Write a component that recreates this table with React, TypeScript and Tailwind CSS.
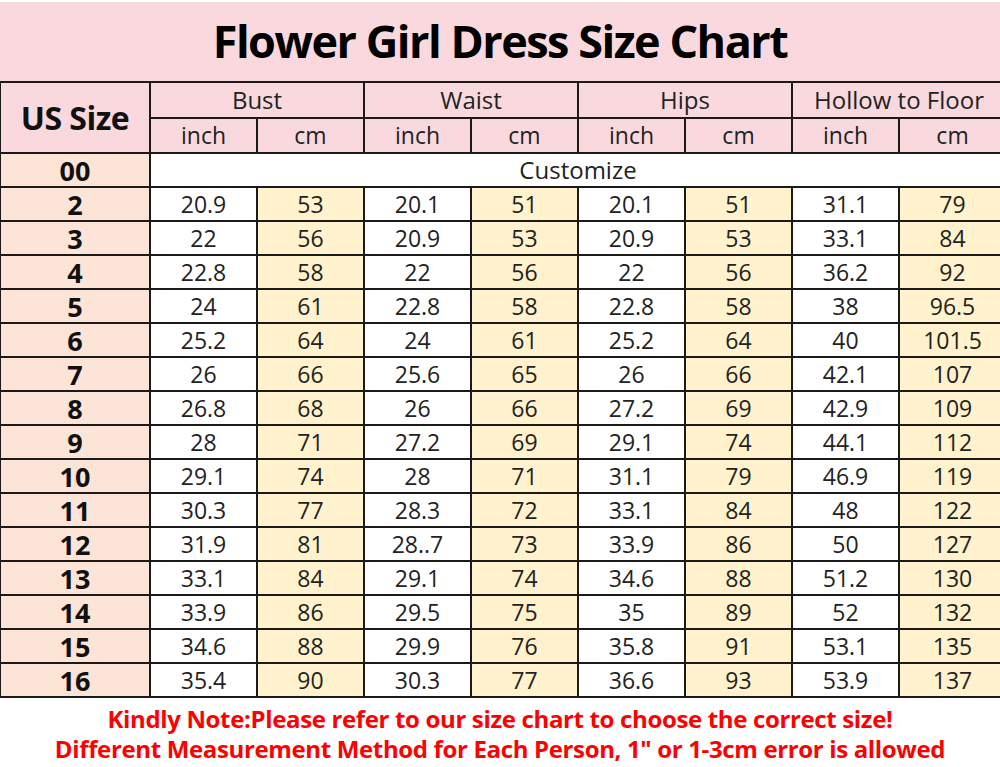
import React from "react";

const rows: (string | number)[][] = [
  ["2", "20.9", "53", "20.1", "51", "20.1", "51", "31.1", "79"],
  ["3", "22", "56", "20.9", "53", "20.9", "53", "33.1", "84"],
  ["4", "22.8", "58", "22", "56", "22", "56", "36.2", "92"],
  ["5", "24", "61", "22.8", "58", "22.8", "58", "38", "96.5"],
  ["6", "25.2", "64", "24", "61", "25.2", "64", "40", "101.5"],
  ["7", "26", "66", "25.6", "65", "26", "66", "42.1", "107"],
  ["8", "26.8", "68", "26", "66", "27.2", "69", "42.9", "109"],
  ["9", "28", "71", "27.2", "69", "29.1", "74", "44.1", "112"],
  ["10", "29.1", "74", "28", "71", "31.1", "79", "46.9", "119"],
  ["11", "30.3", "77", "28.3", "72", "33.1", "84", "48", "122"],
  ["12", "31.9", "81", "28..7", "73", "33.9", "86", "50", "127"],
  ["13", "33.1", "84", "29.1", "74", "34.6", "88", "51.2", "130"],
  ["14", "33.9", "86", "29.5", "75", "35", "89", "52", "132"],
  ["15", "34.6", "88", "29.9", "76", "35.8", "91", "53.1", "135"],
  ["16", "35.4", "90", "30.3", "77", "36.6", "93", "53.9", "137"],
];

const groups = ["Bust", "Waist", "Hips", "Hollow to Floor"];

const cell = "border-2 border-[#1a1a1a] text-center p-0";

export default function App() {
  return (
    <div className="w-[1000px] h-[767px] overflow-hidden bg-white font-['Open_Sans',sans-serif] text-[#222]">
      <div className="mt-[2px] h-[79px] bg-[#fad9de] flex items-center justify-center">
        <h1 className="text-[45px] font-bold text-black tracking-[-1.5px] leading-none pb-[2px]">
          Flower Girl Dress Size Chart
        </h1>
      </div>
      <div className="w-[1000px] overflow-hidden">
        <table className="table-fixed border-collapse w-[1006px] -ml-[1px] text-[23px] leading-none">
          <colgroup>
            <col className="w-[150px]" />
            {Array.from({ length: 8 }).map((_, i) => (
              <col key={i} className="w-[107px]" />
            ))}
          </colgroup>
          <thead>
            <tr className="h-[36px] bg-[#fad9de]">
              <th rowSpan={2} className={`${cell} font-bold text-[32px] text-[#111] tracking-[-0.5px]`}>
                US Size
              </th>
              {groups.map((g) => (
                <th key={g} colSpan={2} className={`${cell} font-normal text-[24px]`}>
                  {g}
                </th>
              ))}
            </tr>
            <tr className="h-[35px] bg-[#fad9de]">
              {groups.map((g) => (
                <React.Fragment key={g}>
                  <th className={`${cell} font-normal`}>inch</th>
                  <th className={`${cell} font-normal`}>cm</th>
                </React.Fragment>
              ))}
            </tr>
          </thead>
          <tbody>
            <tr className="h-[34px]">
              <td className={`${cell} bg-[#fce4d6] font-bold text-[27px] text-[#111]`}>00</td>
              <td colSpan={8} className={`${cell} bg-white text-[24px]`}>
                Customize
              </td>
            </tr>
            {rows.map((r) => (
              <tr key={r[0]} className="h-[34px]">
                {r.map((v, i) => (
                  <td
                    key={i}
                    className={`${cell} ${
                      i === 0
                        ? "bg-[#fce4d6] font-bold text-[27px] text-[#111]"
                        : i % 2 === 0
                        ? "bg-[#fff2cc]"
                        : "bg-white"
                    }`}
                  >
                    {v}
                  </td>
                ))}
              </tr>
            ))}
          </tbody>
        </table>
      </div>
      <div className="pt-[6px] text-center text-[#ff0000] font-bold text-[24px] leading-[30px] tracking-[-0.35px]">
        <p>Kindly Note:Please refer to our size chart to choose the correct size!</p>
        <p>Different Measurement Method for Each Person, 1" or 1-3cm error is allowed</p>
      </div>
    </div>
  );
}
